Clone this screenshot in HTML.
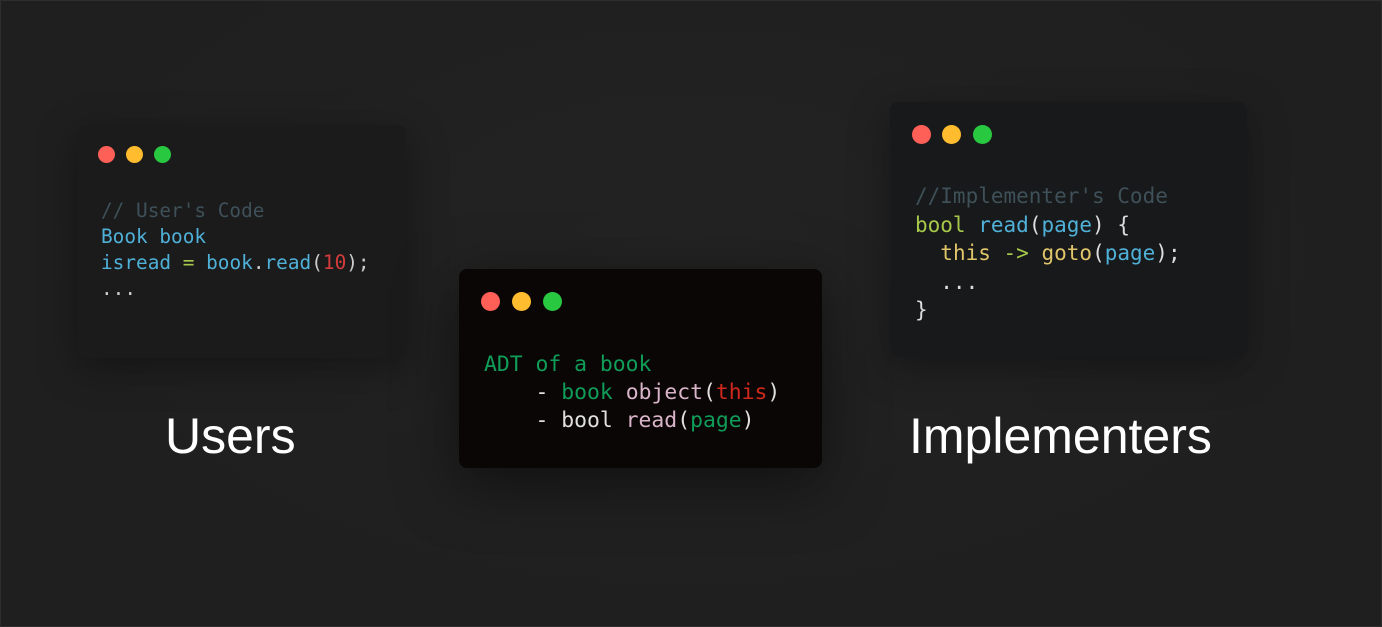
<!DOCTYPE html>
<html><head><meta charset="utf-8"><style>
body{margin:0;width:1382px;height:627px;background:#1f1f1f;overflow:hidden;position:relative;font-family:"DejaVu Sans Mono",monospace}
.frame{position:absolute;left:0;top:0;width:1380px;height:625px;border:1px solid #2e2e2e;background:radial-gradient(ellipse at 50% 40%,#232323,#1f1f1f 70%)}
.card{position:absolute;border-radius:8px}
.dot{position:absolute;border-radius:50%}
.code{position:absolute;white-space:pre}
.lbl{position:absolute;font-family:"Liberation Sans",sans-serif;color:#fff;font-size:50px;line-height:1}
</style></head><body>
<div class="frame"></div>
<div class="card" style="left:78px;top:125px;width:328px;height:233px;background:#1b1b1c;box-shadow:0 10px 40px rgba(0,0,0,.35)">
 <div class="dot" style="left:20px;top:21px;width:17px;height:17px;background:#fe5f57"></div>
 <div class="dot" style="left:48px;top:21px;width:17px;height:17px;background:#febc2e"></div>
 <div class="dot" style="left:76px;top:21px;width:17px;height:17px;background:#28c840"></div>
 <div class="code" style="left:23px;top:73px;font-size:19.4px;line-height:26px;color:#ccc"><span style="color:#3e5058">// User's Code</span>
<span style="color:#4fb1d8">Book book</span>
<span style="color:#4fb1d8">isread</span> <span style="color:#a6c94a">=</span> <span style="color:#4fb1d8">book</span>.<span style="color:#4fb1d8">read</span>(<span style="color:#d43c3c">10</span>);
...</div>
</div>
<div class="card" style="left:459px;top:269px;width:363px;height:199px;background:#0a0606;box-shadow:0 15px 60px rgba(0,0,0,.5)">
 <div class="dot" style="left:22px;top:23px;width:19px;height:19px;background:#fe5f57"></div>
 <div class="dot" style="left:53px;top:23px;width:19px;height:19px;background:#febc2e"></div>
 <div class="dot" style="left:84px;top:23px;width:19px;height:19px;background:#28c840"></div>
 <div class="code" style="left:25px;top:82px;font-size:21.4px;line-height:28px;color:#e0e0e0"><span style="color:#0f9d58">ADT of a book</span>
    - <span style="color:#0f9d58">book</span> <span style="color:#d8b4c8">object</span>(<span style="color:#d0281c">this</span>)
    - bool <span style="color:#d8b4c8">read</span>(<span style="color:#0f9d58">page</span>)</div>
</div>
<div class="card" style="left:890px;top:102px;width:357px;height:255px;background:#18191b;box-shadow:0 10px 40px rgba(0,0,0,.35)">
 <div class="dot" style="left:22px;top:23px;width:19px;height:19px;background:#fe5f57"></div>
 <div class="dot" style="left:52px;top:23px;width:19px;height:19px;background:#febc2e"></div>
 <div class="dot" style="left:83px;top:23px;width:19px;height:19px;background:#28c840"></div>
 <div class="code" style="left:25px;top:80px;font-size:21px;line-height:28.6px;color:#ddd"><span style="color:#3e5058">//Implementer's Code</span>
<span style="color:#a6c94a">bool</span> <span style="color:#4fb1d8">read</span>(<span style="color:#4fb1d8">page</span>) {
  <span style="color:#e0c56a">this</span> <span style="color:#a6c94a">-&gt;</span> <span style="color:#e0c56a">goto</span>(<span style="color:#4fb1d8">page</span>);
  ...
}</div>
</div>
<div class="lbl" style="left:165px;top:411px">Users</div>
<div class="lbl" style="left:909px;top:411px">Implementers</div>
</body></html>
